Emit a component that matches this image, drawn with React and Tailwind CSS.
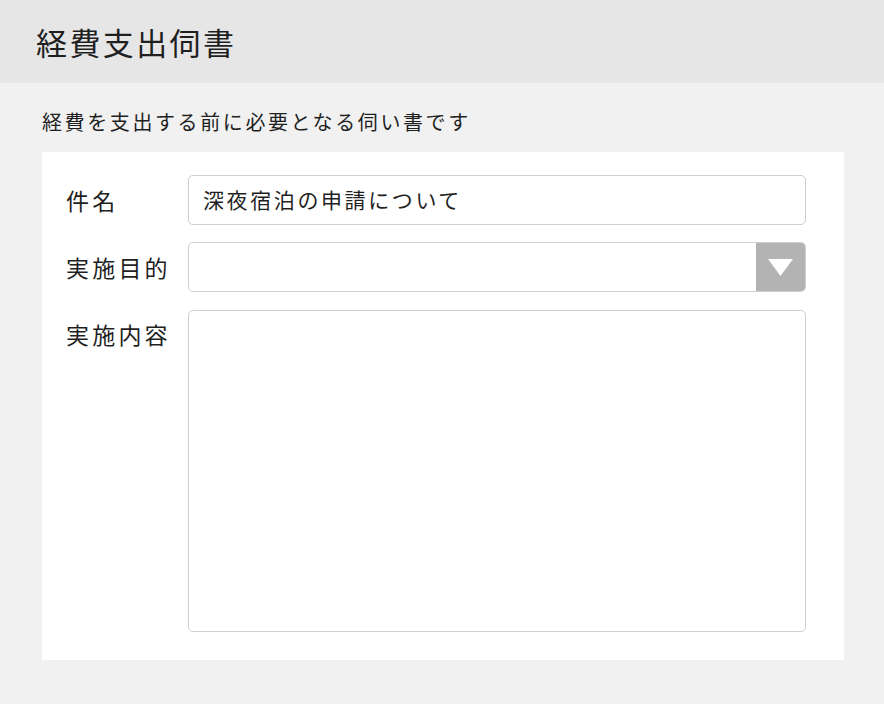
export default function App() {
  const font = { fontFamily: '"Noto Sans CJK JP", "Noto Sans", sans-serif' };
  const inputBox = 'w-full h-[50px] rounded-[5px] border border-[#cfcfcf] bg-white';

  return (
    <div className="min-h-screen w-full bg-[#f1f1f1] text-[#1f1f1f]" style={font}>
      {/* header */}
      <div className="h-[83px] bg-[#e6e6e6] flex items-center px-[36px]">
        <h1 className="text-[31px] leading-none tracking-[2.4px] font-normal">経費支出伺書</h1>
      </div>

      <div className="pl-[42px] pr-[40px]">
        <p className="pt-[25px] h-[69px] text-[20px] leading-[28px] tracking-[2.6px]">
          経費を支出する前に必要となる伺い書です
        </p>

        {/* form card */}
        <div className="bg-white pt-[23px] pl-[24px] pr-[38px] pb-[28px] flex flex-col">
          <div className="flex items-center">
            <label className="w-[122px] shrink-0 text-[23px] tracking-[3.2px]">件名</label>
            <div className={inputBox + ' flex items-center px-[14px]'}>
              <span className="text-[21px] tracking-[2.6px]">深夜宿泊の申請について</span>
            </div>
          </div>

          <div className="flex items-center mt-[17px]">
            <label className="w-[122px] shrink-0 text-[23px] tracking-[3.2px]">実施目的</label>
            <div className={inputBox + ' flex overflow-hidden'}>
              <div className="flex-1" />
              <div className="w-[49px] h-full bg-[#b3b3b3] flex items-center justify-center">
                <svg width="25" height="17" viewBox="0 0 25 17">
                  <polygon points="0,0 25,0 12.5,17" fill="#ffffff" />
                </svg>
              </div>
            </div>
          </div>

          <div className="flex items-start mt-[18px]">
            <label className="w-[122px] shrink-0 pt-[9px] text-[23px] leading-[30px] tracking-[3.2px]">実施内容</label>
            <div className="w-full h-[322px] rounded-[5px] border border-[#cfcfcf] bg-white" />
          </div>
        </div>
      </div>
    </div>
  );
}
